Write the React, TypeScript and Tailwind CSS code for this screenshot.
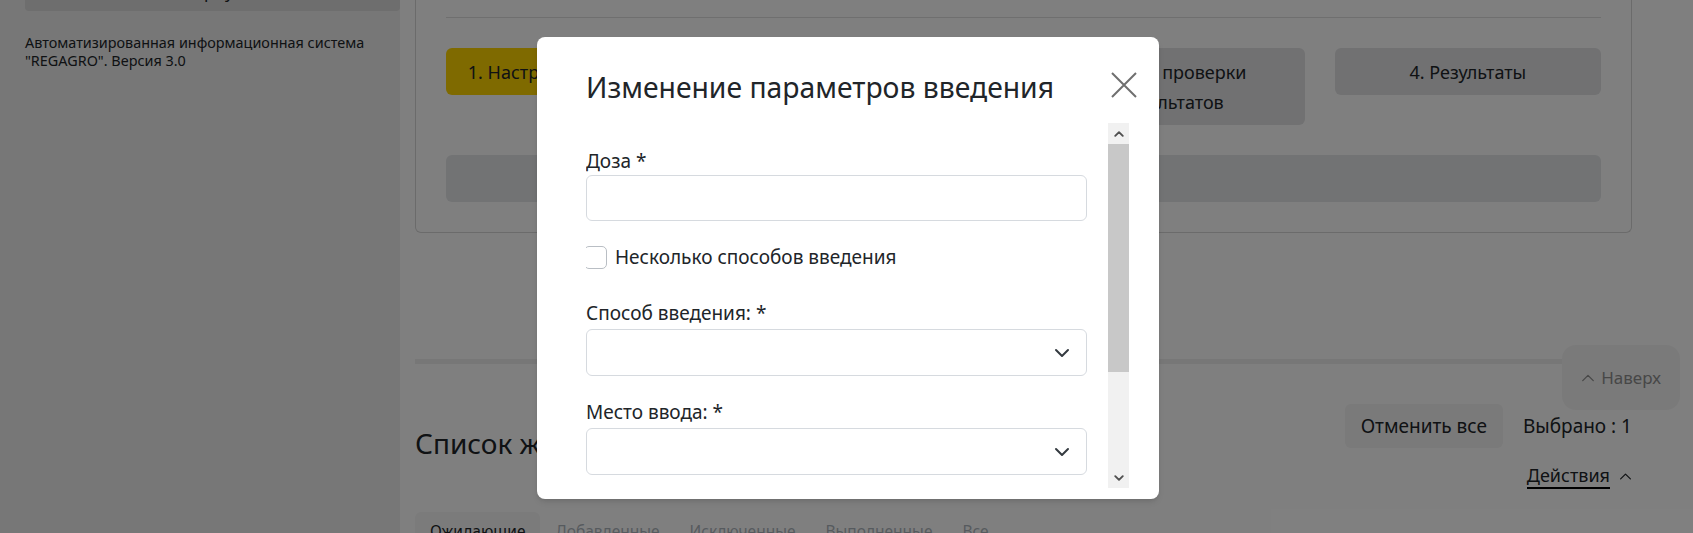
import React from "react";

const steps = [
  { label: "1. Настройка параметров", active: true },
  { label: "2. Выбор животных", active: false },
  { label: "3. Этап проверки результатов", active: false },
  { label: "4. Результаты", active: false },
];

const tabs = ["Ожидающие", "Добавленные", "Исключенные", "Выполненные", "Все"];

function Chevron({ up = false, className = "" }: { up?: boolean; className?: string }) {
  return (
    <svg viewBox="0 0 16 16" className={className} fill="none" stroke="currentColor" strokeWidth="2" strokeLinecap="round" strokeLinejoin="round">
      <path d={up ? "M2 11l6-6 6 6" : "M2 5l6 6 6-6"} />
    </svg>
  );
}

function Field({ label, select = false, className = "" }: { label: string; select?: boolean; className?: string }) {
  return (
    <div className={className}>
      <label className="block text-[19px] leading-[27px] text-[#212529]">{label}</label>
      <div
        className={`flex items-center justify-end rounded-md border border-[#d6dadf] bg-white pr-[16px] ${
          select ? "mt-[2px] h-[47px]" : "h-[46px]"
        }`}
      >
        {select && <Chevron className="h-4 w-4 text-[#343a40]" />}
      </div>
    </div>
  );
}

export default function App() {
  return (
    <div className="relative h-[533px] w-[1693px] overflow-hidden bg-white font-['Noto_Sans',sans-serif] text-[#212529]">
      <div className="flex h-full">
        {/* sidebar */}
        <aside className="w-[400px] shrink-0 bg-[#eeeeee] pl-[25px]">
          <div className="-mt-[27px] flex h-[38px] items-center justify-center rounded-b bg-[#dcdcdc] text-[17px] leading-[24px]">
            Свернуть
          </div>
          <p className="mt-[23px] pr-[10px] text-[14.4px] leading-[17.5px]">
            Автоматизированная информационная система "REGAGRO". Версия 3.0
          </p>
        </aside>

        {/* main */}
        <main className="flex-1 pl-[15px]">
          <div className="w-[1217px]">
            <div className="rounded-b-md border-x border-b border-[#d6d6d6] px-[30px] pb-[30px] pt-[17px]">
              <div className="border-t border-[#dedede]" />
              <div className="mt-[30px] grid grid-cols-4 items-start gap-[30px]">
                {steps.map((s) => (
                  <div
                    key={s.label}
                    className={`rounded-md px-[12px] py-[8.5px] text-center text-[18px] leading-[30px] ${
                      s.active ? "bg-[#ffd400]" : "bg-[#e2e3e5]"
                    }`}
                  >
                    {s.label}
                  </div>
                ))}
              </div>
              <div className="mt-[30px] h-[47px] rounded-md bg-[#e4e6e9]" />
            </div>

            <div className="mt-[126px] h-[5px] bg-[#eeeeee]" />

            <div className="mt-[40px] flex items-start justify-between">
              <h2 className="mt-[23px] text-[28px] leading-[32px]">Список животных</h2>
              <div className="flex flex-col items-end">
                <div className="flex items-center gap-[20px]">
                  <button className="h-[44px] rounded-md bg-[#f4f4f4] px-[16px] text-[19px]">Отменить все</button>
                  <span className="text-[19px]">Выбрано : 1</span>
                </div>
                <div className="mt-[15px] flex items-center gap-[9px]">
                  <span className="border-b-2 border-black text-[18px] leading-[24px]">Действия</span>
                  <Chevron up className="h-[13px] w-[13px] text-[#212529] [stroke-width:1.5]" />
                </div>
              </div>
            </div>

            <div className="mt-[23px] flex">
              {tabs.map((t, i) => (
                <div
                  key={t}
                  className={`rounded-t-md px-[15px] pb-[8px] pt-[7px] text-[15.5px] leading-[24px] ${
                    i === 0 ? "bg-[#f6f6f6] text-[#212529]" : "text-[#adb5bd]"
                  }`}
                >
                  {t}
                </div>
              ))}
            </div>
          </div>
        </main>
      </div>

      {/* scroll-to-top */}
      <div className="absolute left-[1562px] top-[345px] flex h-[65px] w-[118px] items-center justify-center gap-[6px] rounded-[14px] bg-[#f5f5f5] text-[17px] text-[#8f8f8f]">
        <Chevron up className="h-[14px] w-[14px] [stroke-width:1.5]" />
        <span>Наверх</span>
      </div>

      {/* backdrop */}
      <div className="absolute inset-0 bg-black/50" />

      {/* modal */}
      <div className="absolute left-[537px] top-[37px] h-[462px] w-[622px] rounded-lg bg-white shadow-md">
        <div className="flex items-start justify-between pl-[49px] pr-[22px] pt-[33px]">
          <h3 className="text-[28.3px] leading-[34px] text-[#212529]">Изменение параметров введения</h3>
          <svg viewBox="0 0 26 26" className="mt-[2px] h-[26px] w-[26px]" stroke="#6f6f6f" strokeWidth="2">
            <path d="M1 1l24 24M25 1L1 25" />
          </svg>
        </div>

        <div className="mt-[19px] flex pl-[49px] pr-[30px]">
          <div className="h-[365px] w-[501px] overflow-hidden pt-[25px]">
            <Field label="Доза *" />
            <div className="mt-[25px] flex items-center gap-[8px]">
              <span className="-ml-[2px] h-[23px] w-[23px] rounded-[5px] border border-[#b9bec4] bg-white" />
              <span className="text-[19px] leading-[23px]">Несколько способов введения</span>
            </div>
            <Field label="Способ введения: *" select className="mt-[31px]" />
            <Field label="Место ввода: *" select className="mt-[23px]" />
          </div>

          {/* scrollbar */}
          <div className="ml-[21px] flex h-[365px] w-[21px] flex-col bg-[#f1f1f1]">
            <div className="flex h-[21px] items-center justify-center text-[#505050]">
              <Chevron up className="h-[10px] w-[10px] [stroke-width:3]" />
            </div>
            <div className="h-[228px] bg-[#c8c8c8]" />
            <div className="flex-1" />
            <div className="flex h-[21px] items-center justify-center text-[#505050]">
              <Chevron className="h-[10px] w-[10px] [stroke-width:3]" />
            </div>
          </div>
        </div>
      </div>
    </div>
  );
}
